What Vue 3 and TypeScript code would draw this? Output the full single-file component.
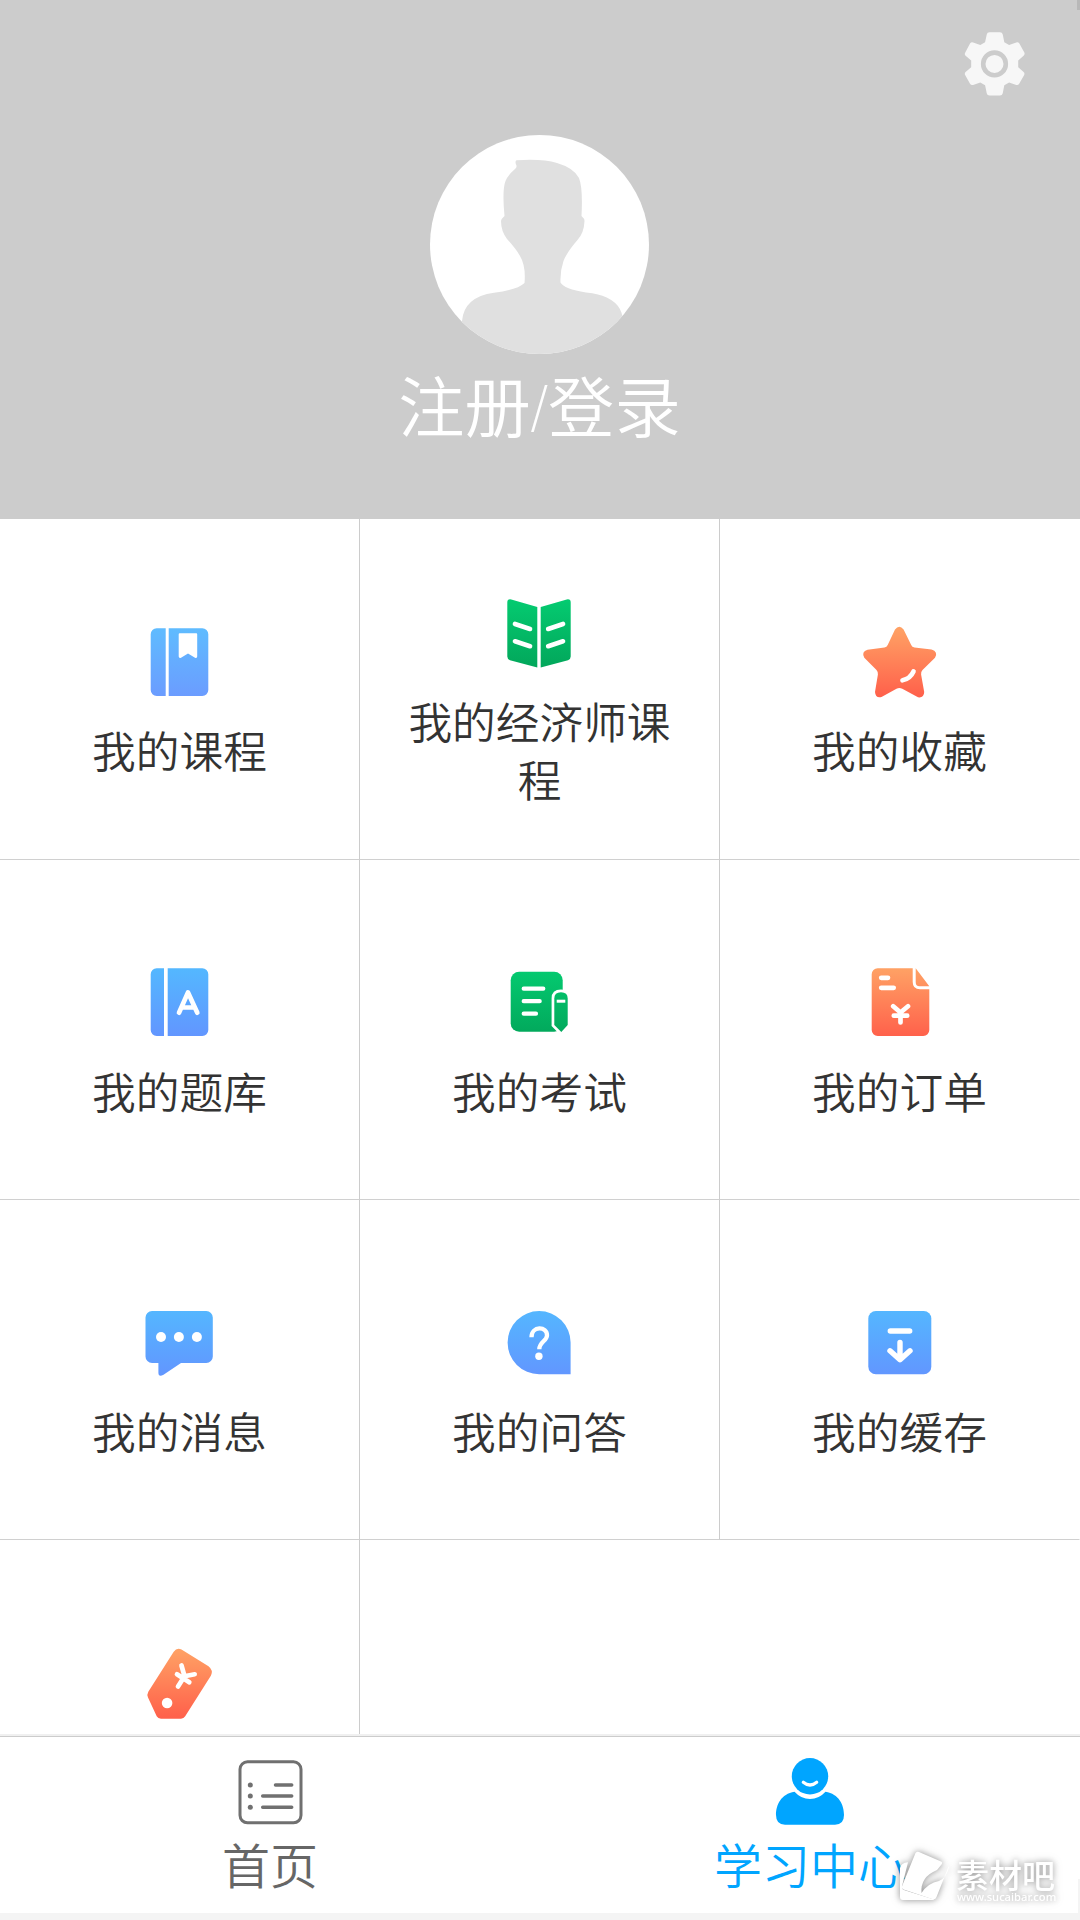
<script setup lang="ts">
interface Item {
  icon: string
  label: string
}

const items: Item[] = [
  { icon: 'course', label: '我的课程' },
  { icon: 'economist', label: '我的经济师课程' },
  { icon: 'star', label: '我的收藏' },
  { icon: 'bank', label: '我的题库' },
  { icon: 'exam', label: '我的考试' },
  { icon: 'order', label: '我的订单' },
  { icon: 'message', label: '我的消息' },
  { icon: 'question', label: '我的问答' },
  { icon: 'cache', label: '我的缓存' },
  { icon: 'coupon', label: '' },
]
</script>

<template>
  <div class="screen">
    <svg class="defs" width="0" height="0" aria-hidden="true">
      <defs>
        <linearGradient id="blue" x1="0" y1="8" x2="0" y2="74" gradientUnits="userSpaceOnUse">
          <stop offset="0" stop-color="#54b7ff" />
          <stop offset="1" stop-color="#6296ff" />
        </linearGradient>
        <linearGradient id="sky" x1="0" y1="8" x2="0" y2="74" gradientUnits="userSpaceOnUse">
          <stop offset="0" stop-color="#5fbbff" />
          <stop offset="1" stop-color="#6b9cff" />
        </linearGradient>
        <linearGradient id="green" x1="0" y1="8" x2="0" y2="74" gradientUnits="userSpaceOnUse">
          <stop offset="0" stop-color="#04ca70" />
          <stop offset="1" stop-color="#02a75b" />
        </linearGradient>
        <linearGradient id="orange" x1="0" y1="8" x2="0" y2="74" gradientUnits="userSpaceOnUse">
          <stop offset="0" stop-color="#ffa064" />
          <stop offset="1" stop-color="#ff614b" />
        </linearGradient>
      </defs>
    </svg>

    <header class="profile">
      <svg class="gear" width="64" height="68" viewBox="0 0 64 68">
        <path
          transform="translate(1.500 0) scale(0.960 1)"
          d="M27 2.300H38Q40.300 2.300 40.900 4.600L42.500 12.200L47.500 14.900L55 12.400Q57 11.800 58.200 13.500L63.500 22.800Q64 24.500 62.600 25.800L57 30.400V37.200L62.600 42Q64 43.200 63.200 45L58 53.800Q56.800 55.500 55 54.900L47.500 52.400L42.500 55.200L40.900 63.200Q40.300 65.500 38 65.500H27Q24.700 65.500 24.200 63.200L22.500 55.200L17.500 52.400L10 54.900Q8 55.500 6.800 53.800L1.700 45Q.8 43.200 2.200 42L8 37.200V30.400L2.200 25.800Q.8 24.500 1.700 22.800L6.800 13.500Q8 11.800 10 12.400L17.500 14.900L22.500 12.200L24.200 4.600Q24.700 2.300 27 2.300Z"
          fill="#f7f7f7"
        />
        <circle cx="32.500" cy="33.900" r="11.300" fill="none" stroke="#ccc" stroke-width="4.600" />
      </svg>
      <svg class="avatar" width="220" height="220" viewBox="0 0 220 220">
        <defs>
          <clipPath id="face"><circle cx="109.500" cy="110.500" r="109.500" /></clipPath>
        </defs>
        <circle cx="109.500" cy="110.500" r="109.500" fill="#fff" />
        <g clip-path="url(#face)">
          <path
            d="M86.500 26.300Q112 24.500 127 29Q144 34 149 44Q153 54 151.500 82Q154.500 84.500 154.500 87Q154 99 147.500 106Q137 118 133.500 127Q130 137 130.500 148.500Q134 155 156 158.500Q163 159.300 167 160.300Q190 166 192.500 183V222H32V187Q34 163 64 158.800Q87 156 94.500 149Q96 132 90 122Q86 115 77 105Q71 97 71 87Q71.500 84.500 74.500 82Q72 56 75.500 47Q78 41 85.500 34.500Q87.300 32.500 86 30.500Q84.800 27.500 86.500 26.300Z"
            fill="#e0e0e0"
          />
        </g>
      </svg>
      <div class="login">注册<span class="slash">/</span>登录</div>
      <i class="thumb"></i>
    </header>

    <main class="grid">
      <div v-for="(it, i) in items" :key="it.icon" class="cell" :class="{ last: i % 3 === 2 }">
        <svg class="icon" width="81" height="80" viewBox="0 0 81 80">
          <g v-if="it.icon === 'course'">
            <path d="M26.700 6.300H17.700A6 6 0 0 0 11.700 12.300V68A6 6 0 0 0 17.700 74H26.700ZM29.700 6.300H63.300A6 6 0 0 1 69.300 12.300V68A6 6 0 0 1 63.300 74H29.700Z" fill="url(#sky)" />
            <path d="M40.700 11.300H57.300Q58.200 11.300 58.200 12.300V34.500Q58 36.600 56 35.700L49 31.500L42 35.700Q40 36.600 39.700 34.500V12.300Q39.700 11.300 40.700 11.300Z" fill="#fff" />
          </g>
          <g v-else-if="it.icon === 'economist'">
            <path d="M38.300 14L12.300 6.400Q8.300 5.600 8.300 9.500V63.500Q8.300 66.300 11 67.200L38.300 74.600ZM41.700 14L67.700 6.400Q71.700 5.600 71.700 9.500V63.500Q71.700 66.300 69 67.200L41.700 74.600Z" fill="url(#green)" />
            <path class="w5" d="M16 31L31 35.900M16 48.300L31 53.200M49.200 35.900L64 31M49.200 53.200L64 48.300" />
          </g>
          <g v-else-if="it.icon === 'star'">
            <path d="M36 7.500Q40.300 2 44.600 7.500L52.200 23Q53 25.200 55.500 25.500L72.500 27.600Q79.500 29.800 76 35.800L63.500 48Q61.700 50 62.100 52.500L65.200 70Q65 76.200 59 75.300L43.300 66.700Q40.300 65.200 37.500 66.700L22.500 75Q16.500 76.500 16 70L18.900 52.500Q19.300 50 17.500 48L5.300 35.800Q2 30 8.500 27.800L25.500 25.500Q27.800 25.200 28.700 23Z" fill="url(#orange)" />
            <path class="w5" d="M43.500 58.300Q51 57 54.500 49.500" />
          </g>
          <g v-else-if="it.icon === 'bank'">
            <path d="M25 6.300H17.700A6 6 0 0 0 11.700 12.300V68A6 6 0 0 0 17.700 74H25ZM28.700 6.300H63.300A6 6 0 0 1 69.300 12.300V68A6 6 0 0 1 63.300 74H28.700Z" fill="url(#blue)" />
            <path class="w5" d="M40 50.700L49 30.500L58.300 50.700M44 45.500H54.500" />
          </g>
          <g v-else-if="it.icon === 'exam'">
            <rect x="11.700" y="9.700" width="52" height="60" rx="8.500" fill="url(#green)" />
            <path class="w4" d="M24.700 26.700H44.300M24.700 39.200H40.700M24.700 51.700H37" />
            <path d="M55.300 36.500Q55.300 30.300 62 30.300T68.700 36.500V63L62.300 70L55.300 63Z" stroke="#fff" stroke-width="5.400" paint-order="stroke" fill="url(#green)" />
            <path d="M57.700 39.200H66.300" stroke="#fff" stroke-width="3" />
          </g>
          <g v-else-if="it.icon === 'order'">
            <path d="M18.700 6.300H53.700V20Q53.700 27.300 61 27.300H70.300V68A6 6 0 0 1 64.300 74H18.700A6 6 0 0 1 12.700 68V12.300A6 6 0 0 1 18.700 6.300ZM56.700 6.300L70.300 24.300H60.500Q56.700 24.300 56.700 20Z" fill="url(#orange)" />
            <path class="w5" d="M22.200 15.800H29M22.200 25.800H34.700M34.200 44.200L41.500 50.500L49 44.200M41.500 50.500V60.500M34.800 53.700H48.200" />
          </g>
          <g v-else-if="it.icon === 'message'">
            <path d="M13 9H67.300A6.500 6.500 0 0 1 73.800 15.500V54.500A6.500 6.500 0 0 1 67.300 61H42L24.500 72.700Q19.400 75.500 19.400 70.500V61H13A6.500 6.500 0 0 1 6.500 54.500V15.500A6.500 6.500 0 0 1 13 9Z" fill="url(#blue)" />
            <g fill="#fff"><circle cx="22" cy="35" r="5" /><circle cx="39.900" cy="35" r="5" /><circle cx="57.900" cy="35" r="5" /></g>
          </g>
          <g v-else-if="it.icon === 'question'">
            <path d="M40.100 9A31.500 31.500 0 0 1 71.600 40.500V72.200H40.100A31.500 31.600 0 0 1 40.100 9Z" fill="url(#blue)" />
            <path d="M32.500 35.200C32.500 23.500 48.300 24 48 33.500C47.800 39 40.300 40 40.300 47.200" fill="none" stroke="#fff" stroke-width="4.300" />
            <circle cx="39.900" cy="54.200" r="3.700" fill="#fff" />
          </g>
          <g v-else-if="it.icon === 'cache'">
            <rect x="9.300" y="9" width="63" height="63.200" rx="7.500" fill="url(#blue)" />
            <path class="w5 bold" d="M31.300 29H50.700M41 40.500V57.500M31 48.800L41 57.800L51 48.800" />
          </g>
          <g v-else>
            <path d="M34.700 8.700Q38 4 42.500 6.500L69.500 23.300Q74.500 27.300 72 32.500L46.200 73.300Q44.800 75.700 42 75.700H22Q19 75.500 17.700 73.300L9 54.500Q7.700 51.500 9.300 48.700Z" fill="url(#orange)" />
            <circle cx="28.100" cy="60" r="5.300" fill="#fff" />
            <path class="w5" d="M42.500 22.500L45.500 33.200L55.700 31.300M45.500 33.200L39 43.500M38 31.200L50.300 39.300" />
          </g>
        </svg>
        <div class="label">{{ it.label }}</div>
      </div>
    </main>

    <nav class="tabs">
      <div class="tab">
        <svg width="72" height="72" viewBox="0 0 72 72">
          <rect x="6" y="5.800" width="61" height="61" rx="7.500" fill="none" stroke="#707070" stroke-width="3" />
          <g fill="#707070"><circle cx="16.300" cy="29" r="2.500" /><circle cx="16.300" cy="40.100" r="2.500" /><circle cx="16.300" cy="51.300" r="2.500" /></g>
          <path d="M41.500 29H57.700M28.700 40.100H57.700M28.700 51.300H57.700" stroke="#707070" stroke-width="3.500" stroke-linecap="round" />
        </svg>
        <div class="tab-label">首页</div>
      </div>
      <div class="tab active">
        <svg width="72" height="72" viewBox="0 0 72 72">
          <circle cx="36" cy="20.300" r="18.200" fill="#00a5ff" />
          <path d="M20.500 35.800Q27 43 36 43T51.500 35.800C65 38 70 49 70 59Q70 68.700 61 68.700H11Q2 68.700 2 59C2 49 7 38 20.500 35.800Z" fill="#00a5ff" />
          <path d="M29.300 26.200Q36 31.800 42.700 26.200" fill="none" stroke="#fff" stroke-width="3.200" stroke-linecap="round" />
        </svg>
        <div class="tab-label">学习中心</div>
      </div>
      <i class="edge"></i>
    </nav>

    <div class="watermark">
      <svg width="62" height="64" viewBox="0 0 62 64">
        <path d="M10 28Q11 23 18 22.300L12 46Q11.500 49 14 50L44 59.500Q45 60 43 60H13Q10 60 10 57Z" fill="#fff" />
        <path d="M25.500 13Q27 11.300 29 12L51 21.500Q53 22.500 51.500 24.500L47 30Q30 37 31.500 53Q38 43 49 41Q56 39 59.500 26L54 33L58 28L46.500 57Q45.500 60 42 59L13.500 49.500Q11 48.500 12.500 45Z" fill="#fff" />
      </svg>
      <div class="brand">
        <div class="brand-name">素材吧</div>
        <div class="brand-url">www.sucaibar.com</div>
      </div>
    </div>
  </div>
</template>

<style>
body {
  background: #fff;
}
</style>

<style scoped>
.screen {
  position: relative;
  width: 1080px;
  height: 1920px;
  overflow: hidden;
  display: flex;
  flex-direction: column;
  background: #f4f4f4;
  font-family: 'Noto Sans CJK SC', sans-serif;
  font-weight: 350;
}
.defs {
  position: absolute;
}
.profile {
  position: relative;
  height: 519px;
  flex: none;
  display: flex;
  flex-direction: column;
  align-items: center;
  background: #ccc;
}
.gear {
  position: absolute;
  left: 962px;
  top: 30px;
}
.avatar {
  margin-top: 134px;
}
.login {
  margin-top: 2px;
  margin-right: 1px;
  height: 94px;
  line-height: 94px;
  font-size: 66.300px;
  color: #fff;
  white-space: nowrap;
}
.slash {
  display: inline-block;
  margin: 0 -2.700px;
  font-family: 'Open Sans', sans-serif;
  font-weight: 350;
  line-height: 1;
  transform: scaleX(0.78);
}
.thumb {
  position: absolute;
  right: 0;
  top: 0;
  width: 3px;
  height: 10px;
  background: #b8b8b8;
}
.grid {
  height: 1215px;
  flex: none;
  overflow: hidden;
  display: grid;
  grid-template-columns: repeat(3, 360px);
  grid-template-rows: 341px repeat(3, 340px);
  background: #fff;
}
.cell {
  box-sizing: border-box;
  display: flex;
  flex-direction: column;
  align-items: center;
  justify-content: center;
  border-right: 1px solid #ccc;
  border-bottom: 1px solid #d0d0d0;
}
.cell.last {
  border-right-color: #fff;
}
.icon {
  flex: none;
  margin-top: 22.500px;
}
.label {
  margin-top: 18.300px;
  width: 270px;
  min-height: 58px;
  line-height: 58.400px;
  font-size: 43.700px;
  text-align: center;
  color: #333;
}
.w5,
.w4 {
  fill: none;
  stroke: #fff;
  stroke-width: 4.700px;
  stroke-linecap: round;
  stroke-linejoin: round;
}
.w4 {
  stroke-width: 4.200px;
}
.bold {
  stroke-width: 5.400px;
}
.tabs {
  position: relative;
  box-sizing: border-box;
  height: 179px;
  flex: none;
  display: flex;
  background: #fff;
  border-top: 2px solid #f0f0f0;
  box-shadow: inset 0 1px 0 #ccc;
}
.tab {
  width: 540px;
  padding-top: 20px;
  display: flex;
  flex-direction: column;
  align-items: center;
}
.tab-label {
  height: 72px;
  line-height: 72px;
  font-size: 48px;
  color: #666;
  margin-top: -1px;
}
.active .tab-label {
  color: #00a5ff;
}
.edge {
  position: absolute;
  right: 0;
  bottom: 0;
  width: 2px;
  height: 34px;
  background: #f4f4f4;
}
.watermark {
  position: absolute;
  left: 890px;
  top: 1840px;
  display: flex;
  filter: drop-shadow(0 0 3px rgba(0, 0, 0, 0.32)) drop-shadow(0 0 5px rgba(0, 0, 0, 0.15));
  color: #fff;
}
.brand {
  margin-left: 4px;
  padding-top: 19px;
}
.brand-name {
  height: 31px;
  line-height: 31px;
  font-size: 33px;
  font-weight: 500;
  white-space: nowrap;
}
.brand-url {
  margin-left: 1px;
  font: 500 11.200px/13px 'Noto Sans', sans-serif;
}
</style>
